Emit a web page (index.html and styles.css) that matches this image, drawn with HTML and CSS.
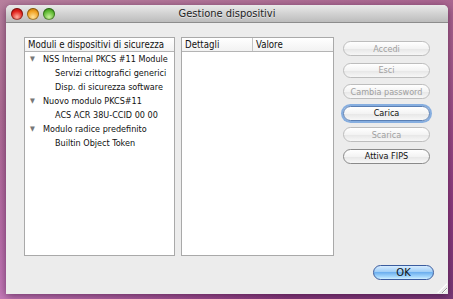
FILE: index.html
```html
<!DOCTYPE html>
<html lang="it">
<head>
    <meta charset="UTF-8">
    <title>Gestione dispositivi</title>
    <link rel="stylesheet" href="styles.css">
</head>
<body>
    <div class="window">
        <div class="titlebar">
            <div class="lights">
                <span class="light red"></span>
                <span class="light yellow"></span>
                <span class="light green"></span>
            </div>
            <div class="title">Gestione dispositivi</div>
        </div>
        <div class="content">
            <div class="main">
                <!-- Device tree -->
                <div class="panel tree">
                    <div class="head"><span class="col">Moduli e dispositivi di sicurezza</span></div>
                    <div class="row parent"><span class="arrow">&#9660;</span>NSS Internal PKCS #11 Module</div>
                    <div class="row child">Servizi crittografici generici</div>
                    <div class="row child">Disp. di sicurezza software</div>
                    <div class="row parent"><span class="arrow">&#9660;</span>Nuovo modulo PKCS#11</div>
                    <div class="row child">ACS ACR 38U-CCID 00 00</div>
                    <div class="row parent"><span class="arrow">&#9660;</span>Modulo radice predefinito</div>
                    <div class="row child">Builtin Object Token</div>
                </div>

                <!-- Details table -->
                <div class="panel details">
                    <div class="head">
                        <span class="col key">Dettagli</span>
                        <span class="col">Valore</span>
                    </div>
                </div>

                <div class="buttons">
                    <button class="btn" disabled>Accedi</button>
                    <button class="btn" disabled>Esci</button>
                    <button class="btn" disabled>Cambia password</button>
                    <button class="btn focus">Carica</button>
                    <button class="btn" disabled>Scarica</button>
                    <button class="btn">Attiva FIPS</button>
                </div>
            </div>
            <div class="footer">
                <button class="ok">OK</button>
            </div>
        </div>
        <div class="grip"></div>
    </div>
</body>
</html>
```

FILE: styles.css
```css
body {
    margin: 0;
    width: 453px;
    height: 299px;
    overflow: hidden;
    font-family: 'DejaVu Sans Condensed', 'Liberation Sans', sans-serif;
    font-size: 9px;
    color: #111;
    background:
        radial-gradient(ellipse at 0% 100%, #c47ab8 0%, rgba(196, 122, 184, 0) 45%),
        linear-gradient(160deg, #b8809e 0%, #a8608e 45%, #8e3c80 80%, #7a3a78 100%);
}

.window {
    position: relative;
    margin: 5px 0 0 6px;
    width: 442px;
    height: 289px;
    background: #ececec;
    border-radius: 5px 5px 0 0;
    box-shadow: 0 2px 8px rgba(40, 0, 40, 0.55);
    display: flex;
    flex-direction: column;
    overflow: hidden;
}

.titlebar {
    height: 17px;
    background: linear-gradient(#e9e9e9, #d0d0d0 55%, #bcbcbc);
    border-bottom: 1px solid #8c8c8c;
    display: flex;
    align-items: center;
    position: relative;
}

.lights {
    display: flex;
    gap: 4px;
    padding-left: 5px;
}

.light {
    width: 12px;
    height: 12px;
    border-radius: 50%;
    box-shadow: inset 0 0 0 1px rgba(0, 0, 0, 0.35);
}

.red {
    background: radial-gradient(circle at 50% 75%, #ffb0a0, #e0201a 55%, #8c0a08);
}

.yellow {
    background: radial-gradient(circle at 50% 75%, #ffe29a, #f0a020 55%, #a05a00);
}

.green {
    background: radial-gradient(circle at 50% 75%, #c8f09a, #5cb830 55%, #1e6a0a);
}

.title {
    position: absolute;
    left: 0;
    right: 0;
    text-align: center;
    font-size: 11px;
    color: #222;
    text-shadow: 0 1px 0 rgba(255, 255, 255, 0.5);
}

.content {
    flex: 1;
    padding: 14px 14px 14px 18px;
    display: flex;
    flex-direction: column;
}

.main {
    display: flex;
    height: 219px;
}

.panel {
    background: #fff;
    border: 1px solid #a9a9a9;
    box-sizing: border-box;
}

.tree {
    width: 151px;
}

.details {
    width: 153px;
    margin-left: 6px;
}

.head {
    height: 13px;
    border-bottom: 1px solid #b4b4b4;
    background: linear-gradient(#ffffff, #f2f2f2);
    display: flex;
    font-size: 9.6px;
    line-height: 13px;
    white-space: nowrap;
}

.col {
    padding-left: 3px;
}

.key {
    width: 67px;
    border-right: 1px solid #c4c4c4;
}

.row {
    height: 14px;
    line-height: 14px;
    white-space: nowrap;
}

.parent {
    padding-left: 5px;
}

.child {
    padding-left: 30px;
}

.arrow {
    display: inline-block;
    width: 13px;
    font-size: 7px;
    color: #777;
    vertical-align: top;
}

.buttons {
    margin-left: 9px;
    margin-top: 4px;
    display: flex;
    flex-direction: column;
    gap: 6.5px;
}

.btn {
    width: 87px;
    height: 15px;
    padding: 0;
    font-family: inherit;
    font-size: 9px;
    color: #111;
    white-space: nowrap;
    border: 1px solid #8a8a8a;
    border-radius: 8px;
    background: linear-gradient(#ffffff, #f3f3f3 50%, #e6e6e6 51%, #f7f7f7);
}

.btn:disabled {
    color: #a0a0a0;
    border-color: #bdbdbd;
}

.focus {
    border-color: #5a7fb4;
    box-shadow: 0 0 0 2px #86aee0;
}

.footer {
    margin-top: auto;
    display: flex;
    justify-content: flex-end;
}

.ok {
    width: 61px;
    height: 15px;
    padding: 0;
    font-family: inherit;
    font-size: 11px;
    color: #111;
    border: 1px solid #3b5c9e;
    border-radius: 8px;
    background: linear-gradient(#d6ecff, #9fcdf6 45%, #6eb0ef 50%, #a9dafd 85%, #d4f0ff);
}

.grip {
    position: absolute;
    right: 1px;
    bottom: 1px;
    width: 10px;
    height: 10px;
    background: repeating-linear-gradient(135deg, transparent 0 2px, #9a9a9a 2px 3px, #fff 3px 4px);
    clip-path: polygon(100% 0, 100% 100%, 0 100%);
}
```
